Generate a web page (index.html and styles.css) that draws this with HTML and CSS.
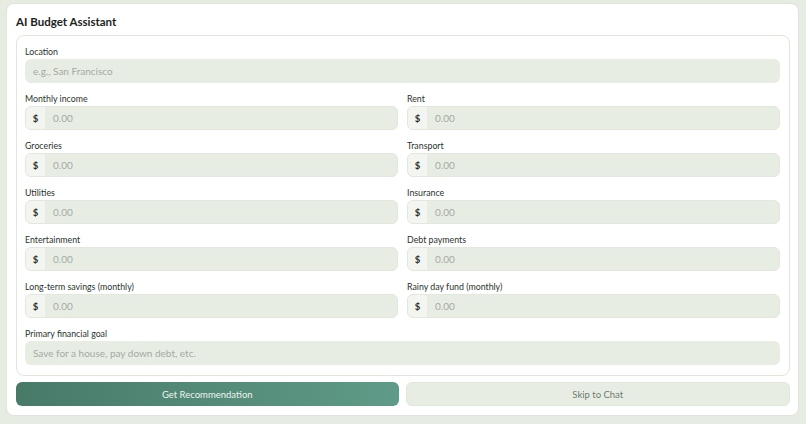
FILE: index.html
```html
<!DOCTYPE html>
<html>
<head>
<meta charset="utf-8">
<link rel="stylesheet" href="styles.css">
</head>
<body>
<div class="card">
  <h1 class="title">AI Budget Assistant</h1>
  <div class="panel">
    <div class="field full">
      <label class="label">Location</label>
      <div class="input">e.g., San Francisco</div>
    </div>
    <div class="grid">
      <div class="field"><label class="label">Monthly income</label><div class="money"><span class="cur">$</span><span class="val">0.00</span></div></div>
      <div class="field"><label class="label">Rent</label><div class="money"><span class="cur">$</span><span class="val">0.00</span></div></div>
      <div class="field"><label class="label">Groceries</label><div class="money"><span class="cur">$</span><span class="val">0.00</span></div></div>
      <div class="field"><label class="label">Transport</label><div class="money"><span class="cur">$</span><span class="val">0.00</span></div></div>
      <div class="field"><label class="label">Utilities</label><div class="money"><span class="cur">$</span><span class="val">0.00</span></div></div>
      <div class="field"><label class="label">Insurance</label><div class="money"><span class="cur">$</span><span class="val">0.00</span></div></div>
      <div class="field"><label class="label">Entertainment</label><div class="money"><span class="cur">$</span><span class="val">0.00</span></div></div>
      <div class="field"><label class="label">Debt payments</label><div class="money"><span class="cur">$</span><span class="val">0.00</span></div></div>
      <div class="field"><label class="label">Long-term savings (monthly)</label><div class="money"><span class="cur">$</span><span class="val">0.00</span></div></div>
      <div class="field"><label class="label">Rainy day fund (monthly)</label><div class="money"><span class="cur">$</span><span class="val">0.00</span></div></div>
    </div>
    <div class="field full">
      <label class="label">Primary financial goal</label>
      <div class="input">Save for a house, pay down debt, etc.</div>
    </div>
  </div>
  <div class="actions">
    <button class="btn primary">Get Recommendation</button>
    <button class="btn secondary">Skip to Chat</button>
  </div>
</div>
</body>
</html>
```
FILE: styles.css
```css
html, body {
  margin: 0;
  padding: 0;
  background: #e7ece3;
  font-family: Lato, "Noto Sans", sans-serif;
  color: #1f2a22;
}
.card {
  margin: 3px 7px 0 6px;
  height: 413px;
  box-sizing: border-box;
  background: #ffffff;
  border: 1px solid #dfe5da;
  border-radius: 8px;
  padding: 10px 8px 0 9px;
}
.title {
  margin: 0 0 6px 0;
  font-size: 11.5px;
  font-weight: 700;
  line-height: 15px;
  color: #1b231d;
}
.panel {
  border: 1px solid #e1e6dc;
  border-radius: 8px;
  padding: 10px 9px 10px 8px;
  display: flex;
  flex-direction: column;
  gap: 10px;
}
.grid {
  display: grid;
  grid-template-columns: 1fr 1fr;
  column-gap: 9px;
  row-gap: 10px;
}
.field {
  display: flex;
  flex-direction: column;
  gap: 2px;
}
.label {
  font-size: 8.8px;
  line-height: 11px;
  color: #2a332c;
}
.input {
  height: 24px;
  box-sizing: border-box;
  background: #e8ede4;
  border-radius: 6px;
  padding: 0 8px;
  display: flex;
  align-items: center;
  font-size: 10px;
  color: #a2aba2;
}
.money {
  height: 24px;
  box-sizing: border-box;
  display: flex;
  border-radius: 6px;
  overflow: hidden;
  background: #e8ede4;
  border: 1px solid #e3e8df;
}
.cur {
  width: 19px;
  flex: none;
  background: #f3f5f0;
  display: flex;
  align-items: center;
  justify-content: center;
  font-size: 9.5px;
  font-weight: 700;
  color: #2b332d;
}
.val {
  display: flex;
  align-items: center;
  padding-left: 8px;
  font-size: 10px;
  color: #a2aba2;
}
.actions {
  display: flex;
  gap: 7px;
  margin-top: 6px;
}
.btn {
  flex: 1;
  height: 24px;
  border: none;
  border-radius: 6px;
  font-family: inherit;
  font-size: 9.5px;
}
.primary {
  background: linear-gradient(90deg, #487a68 0%, #5f9b88 100%);
  color: #eef4ef;
}
.secondary {
  background: #e8ede4;
  border: 1px solid #e2e7de;
  color: #6e7b71;
}
```
